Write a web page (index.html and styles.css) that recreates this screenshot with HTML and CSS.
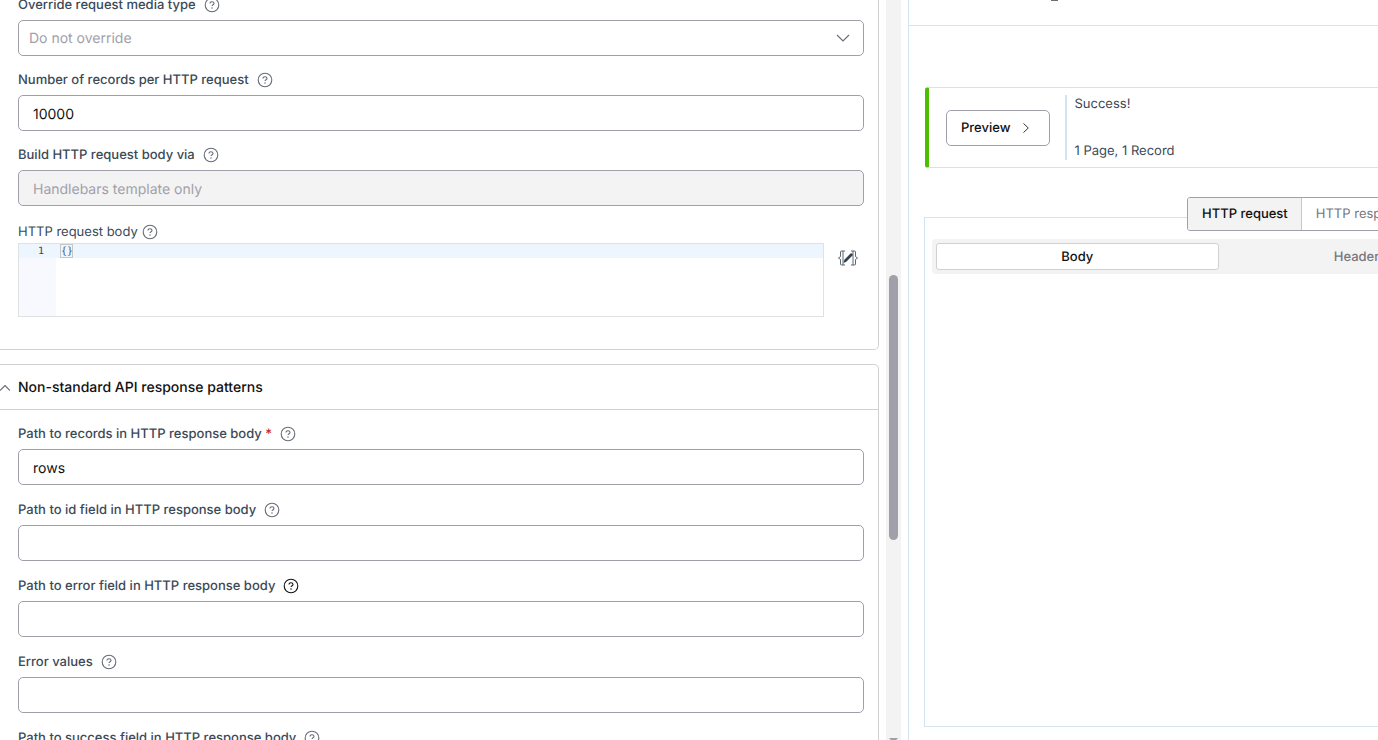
FILE: index.html
```
<!DOCTYPE html>
<html lang="en">
<head>
<meta charset="utf-8">
<title>Export settings</title>
<link rel="stylesheet" href="styles.css">
</head>
<body>
<svg class="defs" aria-hidden="true">
  <symbol id="help" viewBox="0 0 16 16">
    <circle cx="8" cy="8" r="6.8" fill="none" stroke="currentColor" stroke-width="1.1"/>
    <path d="M6 6.6C6 5.4 6.9 4.7 8 4.7s2 .7 2 1.7c0 1.3-2 1.3-2 2.7" fill="none" stroke="currentColor" stroke-width="1.1"/>
    <circle cx="8" cy="11.1" r=".75" fill="currentColor"/>
  </symbol>
</svg>
<div class="page">
  <main class="form">
    <section class="card card-first">
      <div class="field">
        <div class="label-row"><label for="media">Override request media type</label><button class="help" aria-label="Help"><svg><use href="#help"/></svg></button></div>
        <div class="select-wrap">
          <select id="media"><option>Do not override</option></select>
          <svg class="caret" viewBox="0 0 14 8"><path d="M1 1l6 6 6-6"/></svg>
        </div>
      </div>
      <div class="field">
        <div class="label-row"><label for="count">Number of records per HTTP request</label><button class="help" aria-label="Help"><svg><use href="#help"/></svg></button></div>
        <input id="count" type="text" value="10000">
      </div>
      <div class="field">
        <div class="label-row"><label for="via">Build HTTP request body via</label><button class="help" aria-label="Help"><svg><use href="#help"/></svg></button></div>
        <input id="via" type="text" value="Handlebars template only" disabled>
      </div>
      <div class="field">
        <div class="label-row label-row-code"><label for="code">HTTP request body</label><button class="help" aria-label="Help"><svg><use href="#help"/></svg></button></div>
        <div class="code-row">
          <div class="editor">
            <div class="gutter"><span>1</span></div>
            <textarea id="code" spellcheck="false">{}</textarea>
            <span class="match"></span>
          </div>
          <button class="edit" aria-label="Edit template">
            <svg viewBox="0 0 20 16">
              <path d="M5 1H3.500Q2.500 1 2.500 2v4.500L.5 8l2 1.500V14q0 1 1 1H5M7 1H5v14h2M15 1h1.500q1 0 1 1v4.500l2 1.500-2 1.500V14q0 1-1 1H15M13 1h2v14h-2" fill="none" stroke="currentColor" stroke-width=".8"/>
              <path d="M5.500 13l.8-3.200 6.200-6.200q1-.6 1.800.2t.2 1.800l-6.200 6.200z" fill="currentColor"/>
            </svg>
          </button>
        </div>
      </div>
    </section>

    <section class="card">
      <h2 class="card-head"><button><svg viewBox="0 0 10 6"><path d="M0 5.500l5-5 5 5"/></svg>Non-standard API response patterns</button></h2>
      <div class="card-body">
        <div class="field">
          <div class="label-row"><label for="rows">Path to records in HTTP response body <b>*</b></label><button class="help" aria-label="Help"><svg><use href="#help"/></svg></button></div>
          <input id="rows" type="text" value="rows">
        </div>
        <div class="field">
          <div class="label-row"><label for="idf">Path to id field in HTTP response body</label><button class="help" aria-label="Help"><svg><use href="#help"/></svg></button></div>
          <input id="idf" type="text">
        </div>
        <div class="field">
          <div class="label-row"><label for="err">Path to error field in HTTP response body</label><button class="help help-active" aria-label="Help"><svg><use href="#help"/></svg></button></div>
          <input id="err" type="text">
        </div>
        <div class="field">
          <div class="label-row"><label for="errv">Error values</label><button class="help" aria-label="Help"><svg><use href="#help"/></svg></button></div>
          <input id="errv" type="text">
        </div>
        <div class="field">
          <div class="label-row"><label for="succ">Path to success field in HTTP response body</label><button class="help" aria-label="Help"><svg><use href="#help"/></svg></button></div>
          <input id="succ" type="text">
        </div>
      </div>
    </section>
  </main>

  <div class="track"><div class="thumb"></div><svg class="arrow" viewBox="0 0 9 5"><path d="M0 0h9L4.500 5z"/></svg></div>

  <aside class="side">
    <header class="side-head"><span class="tail"></span></header>
    <div class="side-body">
      <div class="status">
        <button class="preview">Preview <svg viewBox="0 0 6 10"><path d="M.5.500L5.300 5 .5 9.500"/></svg></button>
        <div class="result"><span>Success!</span><span>1 Page, 1 Record</span></div>
      </div>
      <div class="panel">
        <div class="tabs"><button class="on">HTTP request</button><button>HTTP response</button></div>
        <div class="segments"><button class="on">Body</button><button>Headers</button></div>
      </div>
    </div>
  </aside>
</div>
</body>
</html>
```
FILE: styles.css
```
* { box-sizing: border-box; }
body {
  margin: 0;
  background: #fff;
  color: #3c4a57;
  font: 500 13px/20px Inter, "Liberation Sans", sans-serif;
  text-rendering: geometricPrecision;
}
button, input, select, textarea { font: inherit; color: inherit; text-rendering: inherit; }
button { border: 0; padding: 0; background: none; }
.defs { position: absolute; width: 0; height: 0; }

.page {
  display: grid;
  grid-template-columns: minmax(0, 1fr) 15px 477px;
  height: 100vh;
  overflow: hidden;
}

.form { overflow: hidden; padding-right: 7px; }
.card {
  border: 1px solid #d0d1d3;
  border-left: 0;
  border-radius: 0 5px 5px 0;
  margin-bottom: 14px;
}
.card-first {
  display: grid;
  gap: 14px;
  margin-top: -6px;
  padding: 0 14px 32px 18px;
}
.card-head { margin: 0; border-bottom: 1px solid #d0d1d3; font: inherit; }
.card-head button {
  display: flex;
  align-items: center;
  gap: 8px;
  height: 44px;
  padding-top: 2px;
  color: #111;
  font-size: 14px;
}
.card-head svg { width: 10px; height: 6px; fill: none; stroke: #6a7079; stroke-width: 1.2; }
.card-body { display: grid; gap: 15px; padding: 14px 14px 20px 18px; }

.label-row { display: flex; align-items: center; gap: 8px; height: 20px; margin-bottom: 5px; }
.label-row b { color: #c62828; font-weight: 500; }
.label-row-code { gap: 4px; height: 23px; margin-bottom: 0; font-weight: 400; }
.help { width: 16px; height: 16px; color: #666b76; }
.help svg { display: block; width: 16px; height: 16px; }
.help-active { color: #111; }

.field input, .field select {
  display: block;
  width: 100%;
  height: 36px;
  padding: 2px 14px 0;
  border: 1px solid #a1a0aa;
  border-radius: 5px;
  background: #fff;
  color: #111;
  font-size: 14px;
  font-weight: 400;
}
.field input:disabled { background: #f3f3f3; color: #a1a0aa; }
.select-wrap { display: grid; align-items: center; }
.select-wrap > * { grid-area: 1 / 1; }
.field select { appearance: none; padding: 2px 10px 0; color: #a1a0aa; }
.caret {
  justify-self: end;
  width: 14px;
  height: 8px;
  margin-right: 14px;
  fill: none;
  stroke: #6a7079;
  stroke-width: 1.2;
  pointer-events: none;
}

.code-row { display: flex; align-items: flex-start; gap: 14px; }
.editor {
  position: relative;
  display: flex;
  flex: 1;
  height: 74px;
  border: 1px solid #e0e1e3;
  background: linear-gradient(#edf6ff 14px, #fff 14px);
  font: 10px/14px "DejaVu Sans Mono", monospace;
}
.gutter {
  width: 37px;
  padding: 1px 12px 0 0;
  background: linear-gradient(#edf6ff 14px, #f8f9ff 14px);
  color: #444;
  text-align: right;
}
.editor textarea {
  flex: 1;
  border: 0;
  padding: 1px 5px;
  background: none;
  color: #555;
  resize: none;
  outline: 0;
}
.match {
  position: absolute;
  top: 0;
  left: 41px;
  width: 13px;
  height: 14px;
  border: 1px solid #c4c8cb;
}
.edit { width: 20px; height: 16px; margin-top: 7px; margin-right: 6px; color: #34434f; }
.edit svg { display: block; width: 20px; height: 16px; }

.track {
  display: grid;
  grid-template-rows: 275fr 265fr 198fr 2px;
  justify-items: center;
  background: #f3f3f3;
}
.thumb { grid-row: 2; width: 9px; border-radius: 5px; background: #a1a0aa; }
.arrow { grid-row: 4; width: 9px; height: 5px; fill: #a1a0aa; }

.side { margin-left: 7px; border-left: 1px solid #d5e3ee; overflow: hidden; }
.side-head { height: 26px; padding-left: 142px; border-bottom: 1px solid #d5e3ee; }
.tail { display: block; width: 7px; height: 1px; background: #6a7079; }
.side-body { min-width: 902px; padding: 61px 15px 0; }
.status {
  display: flex;
  align-items: center;
  gap: 15px;
  height: 81px;
  margin-left: 1px;
  padding-left: 17px;
  border: 1px solid #d5e3ee;
  border-left: 4px solid #4bbe00;
  border-radius: 3px;
}
.preview {
  display: flex;
  align-items: center;
  gap: 13px;
  height: 36px;
  padding: 0 20px 0 14px;
  border: 1px solid #a1a0aa;
  border-radius: 5px;
  color: #111;
}
.preview svg { width: 6px; height: 10px; fill: none; stroke: #333; }
.result {
  display: flex;
  flex-direction: column;
  justify-content: space-between;
  height: 65px;
  padding-left: 7px;
  border-left: 2px solid #d5e3ee;
  font-weight: 400;
  line-height: 18px;
}
.panel {
  position: relative;
  height: calc(100vh - 230px);
  margin-top: 49px;
  padding: 21px 7px 0;
  border: 1px solid #d5e3ee;
}
.tabs {
  position: absolute;
  top: -21px;
  left: 262px;
  display: flex;
  height: 34px;
  border: 1px solid #a1a0aa;
  border-radius: 3px;
  background: #fff;
  overflow: hidden;
}
.tabs button { padding: 0 13px 0 14px; color: #77777f; font-weight: 400; }
.tabs .on { border-right: 1px solid #c8c8cc; background: #f3f3f3; color: #111; font-weight: 500; }
.segments {
  display: grid;
  grid-template-columns: repeat(3, 1fr);
  padding: 4px;
  border-radius: 4px;
  background: #f3f3f3;
}
.segments button { height: 27px; border: 1px solid transparent; border-radius: 3px; color: #77777f; }
.segments .on { border-color: #d0d1d3; background: #fff; color: #111; }
```
